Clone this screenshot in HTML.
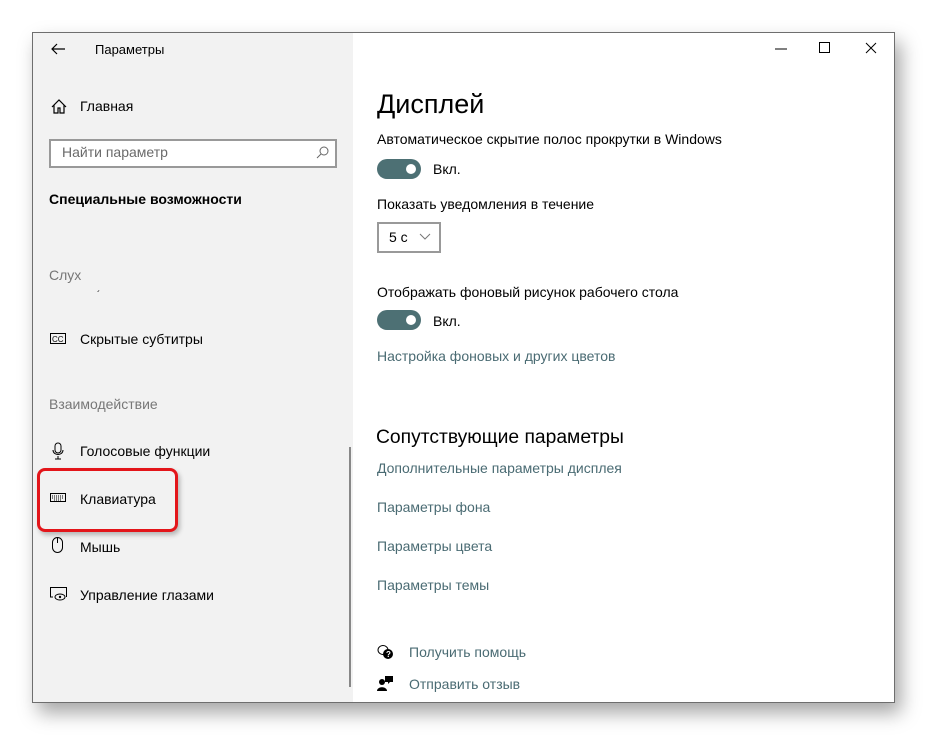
<!DOCTYPE html>
<html><head><meta charset="utf-8"><style>
*{margin:0;padding:0;box-sizing:border-box}
body{width:927px;height:735px;background:#fff;font-family:"Segoe UI","Liberation Sans",sans-serif;position:relative;overflow:hidden;color:#000}
.win{position:absolute;left:32px;top:32px;width:863px;height:671px;border:1px solid #6e6e6e;background:#fff;box-shadow:6px 10px 18px rgba(0,0,0,.35)}
.left{position:absolute;left:0;top:0;width:320px;height:669px;background:#f2f2f2}
.t{position:absolute;white-space:nowrap;font-size:14px}
.s{font-size:13px}
.link{color:#4a6b73}
.tog{position:absolute;width:44px;height:20px;border-radius:10px;background:#4d7074}
.tog:after{content:"";position:absolute;right:5px;top:5px;width:10px;height:10px;border-radius:5px;background:#fff}
svg{position:absolute}
</style></head><body>
<div class="win">
<div class="left">
 <svg style="left:17px;top:9px" width="16" height="14" viewBox="0 0 16 14"><path d="M15 7H2M7 2L2 7l5 5" stroke="#000" stroke-width="1.2" fill="none"/></svg>
 <div class="t s" style="left:62px;top:9px">Параметры</div>
 <svg style="left:18px;top:66px" width="16" height="15" viewBox="0 0 16 15"><path d="M1 8L8 1l7 7M3 6v8h4v-5h2v5h4V6" stroke="#000" stroke-width="1.2" fill="none"/></svg>
 <div class="t" style="left:47px;top:65px">Главная</div>
 <div style="position:absolute;left:16px;top:106px;width:288px;height:29px;border:2px solid #999;background:#fff"></div>
 <div class="t" style="left:29px;top:111px;color:#6a6a6a">Найти параметр</div>
 <svg style="left:283px;top:113px" width="13" height="13" viewBox="0 0 13 13"><circle cx="8" cy="5" r="4" stroke="#666" fill="none"/><path d="M5 8L1 12" stroke="#666"/></svg>
 <div class="t" style="left:16px;top:158px;font-weight:bold">Специальные возможности</div>
 <div class="t" style="left:16px;top:234px;color:#777">Слух</div>
 <div class="t" style="left:64px;top:257px;font-size:10px">´</div>
 <svg style="left:17px;top:300px" width="16" height="12" viewBox="0 0 16 12"><rect x=".5" y=".5" width="15" height="10" stroke="#000" fill="none"/><text x="2" y="9" font-size="8" font-family="Liberation Sans">CC</text></svg>
 <div class="t" style="left:47px;top:298px">Скрытые субтитры</div>
 <div class="t" style="left:16px;top:363px;color:#777">Взаимодействие</div>
 <svg style="left:19px;top:409px" width="12" height="18" viewBox="0 0 12 18"><rect x="3" y="1" width="6" height="10" rx="3" stroke="#000" fill="none"/><path d="M1 8c0 6 10 6 10 0M6 14v3M3 17h6" stroke="#000" fill="none"/></svg>
 <div class="t" style="left:47px;top:410px">Голосовые функции</div>
 <svg style="left:17px;top:460px" width="16" height="9" viewBox="0 0 16 9"><rect x=".5" y=".5" width="15" height="8" stroke="#000" fill="none"/><path d="M2 3h12M2 5h12M4 7h8" stroke="#000" stroke-dasharray="1 1"/></svg>
 <div class="t" style="left:47px;top:458px">Клавиатура</div>
 <div style="position:absolute;left:4px;top:435px;width:141px;height:64px;border:3px solid #e3151a;border-radius:8px;box-shadow:2px 3px 5px rgba(0,0,0,.25)"></div>
 <svg style="left:19px;top:504px" width="12" height="17" viewBox="0 0 12 17"><rect x=".5" y=".5" width="10" height="15" rx="5" stroke="#000" fill="none"/><path d="M5.5 1v5" stroke="#000"/></svg>
 <div class="t" style="left:47px;top:506px">Мышь</div>
 <svg style="left:17px;top:554px" width="18" height="15" viewBox="0 0 18 15"><path d="M3 10H.5V.5h16V10" stroke="#000" fill="none"/><ellipse cx="10" cy="10" rx="5" ry="3" stroke="#000" fill="none"/><circle cx="10" cy="10" r="1.2"/></svg>
 <div class="t" style="left:47px;top:554px">Управление глазами</div>
 <div style="position:absolute;left:316px;top:414px;width:2px;height:240px;background:#888"></div>
</div>
<svg style="left:741px;top:15px" width="14" height="2"><path d="M1 1h12" stroke="#000"/></svg>
<svg style="left:786px;top:9px" width="12" height="12"><rect x=".5" y=".5" width="10" height="10" stroke="#000" fill="none"/></svg>
<svg style="left:832px;top:9px" width="12" height="12"><path d="M1 1l10 10M11 1L1 11" stroke="#000"/></svg>
<div class="t" style="left:344px;top:56px;font-size:27px">Дисплей</div>
<div class="t" style="left:344px;top:98px">Автоматическое скрытие полос прокрутки в Windows</div>
<div class="tog" style="left:344px;top:126px"></div>
<div class="t" style="left:400px;top:128px">Вкл.</div>
<div class="t" style="left:344px;top:163px">Показать уведомления в течение</div>
<div style="position:absolute;left:344px;top:189px;width:64px;height:31px;border:2px solid #999"></div>
<div class="t" style="left:356px;top:196px">5 с</div>
<svg style="left:386px;top:200px" width="12" height="7"><path d="M1 1l5 5 5-5" stroke="#777" fill="none"/></svg>
<div class="t" style="left:344px;top:251px">Отображать фоновый рисунок рабочего стола</div>
<div class="tog" style="left:344px;top:277px"></div>
<div class="t" style="left:400px;top:280px">Вкл.</div>
<div class="t link" style="left:344px;top:315px">Настройка фоновых и других цветов</div>
<div class="t" style="left:343px;top:394px;font-size:19.3px">Сопутствующие параметры</div>
<div class="t link" style="left:344px;top:427px">Дополнительные параметры дисплея</div>
<div class="t link" style="left:344px;top:466px">Параметры фона</div>
<div class="t link" style="left:344px;top:505px">Параметры цвета</div>
<div class="t link" style="left:344px;top:544px">Параметры темы</div>
<svg style="left:344px;top:611px" width="17" height="17" viewBox="0 0 17 17"><ellipse cx="6" cy="6" rx="5" ry="4.5" stroke="#000" fill="none"/><circle cx="11" cy="10" r="5" fill="#000"/><text x="9" y="13" font-size="8" fill="#fff" font-family="Liberation Sans" font-weight="bold">?</text></svg>
<div class="t link" style="left:376px;top:611px">Получить помощь</div>
<svg style="left:344px;top:642px" width="17" height="17" viewBox="0 0 17 17"><circle cx="5" cy="7" r="3"/><path d="M0 16c0-5 10-5 10 0z"/><path d="M8 1h8v6h-3l-2 2V7H8z"/></svg>
<div class="t link" style="left:376px;top:643px">Отправить отзыв</div>
</div>
</body></html>
